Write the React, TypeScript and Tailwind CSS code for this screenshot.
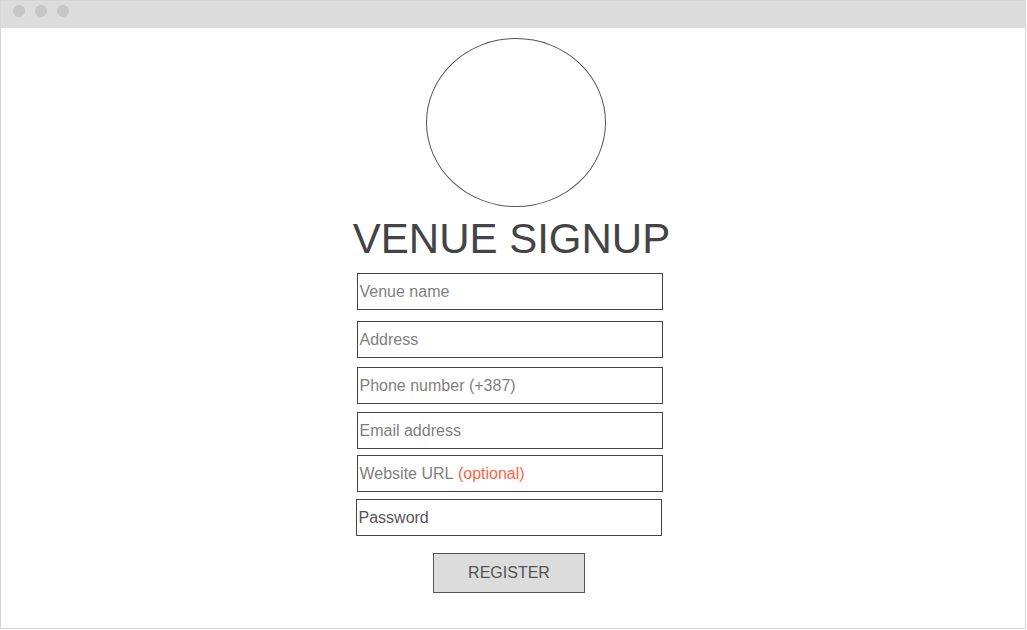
export default function App() {
  const fields = [
    { label: "Venue name", mt: "mt-0" },
    { label: "Address", mt: "mt-[11px]" },
    { label: "Phone number (+387)", mt: "mt-[9px]" },
    { label: "Email address", mt: "mt-[8px]" },
  ]

  return (
    <div className="w-[1027px] h-[630px] bg-white font-['Liberation_Sans',Arial,sans-serif]">
      <div className="w-[1026px] h-[629px] border border-[#d6d6d6] flex flex-col">
        {/* window chrome */}
        <div className="h-[27px] bg-[#dcdcdc] flex items-start gap-[10px] pl-[12px] pt-[4px] shrink-0">
          <span className="w-3 h-3 rounded-full bg-[#c6c6c6]" />
          <span className="w-3 h-3 rounded-full bg-[#c6c6c6]" />
          <span className="w-3 h-3 rounded-full bg-[#c6c6c6]" />
        </div>

        <div className="flex flex-col items-center pt-[10px]">
          <div className="w-[180px] h-[169px] rounded-[50%] border border-[#555] ml-[6px]" />

          <h1 className="mt-[7px] text-[42px] leading-[50px] text-[#444] mr-[3px]">VENUE SIGNUP</h1>

          <div className="mt-[9px] flex flex-col mr-[7px]">
            {fields.map(f => (
              <div
                key={f.label}
                className={`${f.mt} w-[306px] h-[37px] border border-[#444] flex items-center pl-[2px] text-[16px] text-[#7f7f7f]`}
              >
                {f.label}
              </div>
            ))}
            <div className="mt-[6px] w-[306px] h-[37px] border border-[#444] flex items-center pl-[2px] text-[16px] text-[#7f7f7f]">
              Website URL&nbsp;<span className="text-[#ff6347]">(optional)</span>
            </div>
            <div className="mt-[7px] -ml-[1px] w-[306px] h-[37px] border border-[#444] flex items-center pl-[2px] text-[16px] text-[#555]">
              Password
            </div>
          </div>

          <button className="mt-[17px] mr-[8px] w-[152px] h-[40px] bg-[#dcdcdc] border border-[#555] text-[16px] text-[#555] flex items-center justify-center">
            REGISTER
          </button>
        </div>
      </div>
    </div>
  )
}
